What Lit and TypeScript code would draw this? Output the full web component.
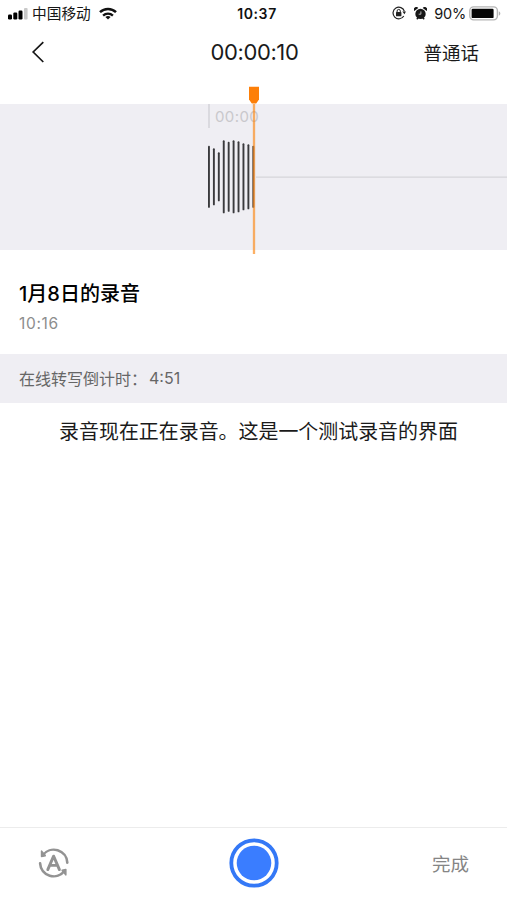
import { LitElement, html, svg, css } from "lit";
import { customElement, property } from "lit/decorators.js";

@customElement("status-bar")
class StatusBar extends LitElement {
  static styles = css`
    :host {
      display: grid;
      grid-template-columns: 1fr auto 1fr;
      align-items: center;
      height: 28px;
      padding: 0 6px 0 8px;
      box-sizing: border-box;
      font-size: 14px;
      color: #161616;
    }
    .side { display: flex; align-items: center; }
    .right { justify-content: flex-end; }
    .signal { margin-right: 4px; }
    .carrier { font-size: 14.7px; line-height: 20px; }
    .wifi { margin: 0 0 2px 8px; }
    .clock { font-weight: 600; font-size: 14px; letter-spacing: 0.6px; color: #111; padding: 0 0 2px 5px; }
    .lock { margin: 0 8px 2px 0; }
    .alarm { margin: 0 7px 2px 0; }
    .percent { margin-right: 3px; font-size: 14.5px; letter-spacing: -0.2px; padding-bottom: 1px; }
    .battery { margin-bottom: 2px; }
    svg { display: block; flex: none; }
  `;
  render() {
    return html`
      <div class="side">
        <svg class="signal" width="20" height="12" viewBox="0 0 20 12">
          <rect x="0" y="6.5" width="4" height="5" rx="1.2" />
          <rect x="5.3" y="4.6" width="4" height="6.9" rx="1.2" />
          <rect x="10.5" y="2.5" width="4" height="9" rx="1.2" />
          <rect x="16" y="0" width="3.6" height="11.5" rx="1" fill="#c9c9c9" />
        </svg>
        <span class="carrier">中国移动</span>
        <svg class="wifi" width="18" height="13" viewBox="0 0 18 13" fill="none" stroke="#111" stroke-width="2.5">
          <path d="M1 5.2a11.4 11.4 0 0 1 16 0" />
          <path d="M4.1 8.6a7 7 0 0 1 9.8 0" stroke-width="2.3" />
          <path d="M9 12.6 6.4 10.1a3.8 3.8 0 0 1 5.2 0z" fill="#111" stroke="none" />
        </svg>
      </div>
      <span class="clock">10:37</span>
      <div class="side right">
        <svg class="lock" width="14" height="14" viewBox="0 0 14 14" fill="none" stroke="#222">
          <path d="M11.8 10A5.8 5.8 0 1 1 12.4 5.3" stroke-width="1.2" />
          <path d="M10.4 5.4h3.6l-1.6 2.8z" fill="#222" stroke="none" />
          <rect x="4" y="6.1" width="5.4" height="4.2" rx=".6" fill="#222" stroke="none" />
          <path d="M5.1 6.4V5a1.6 1.6 0 0 1 3.2 0v1.4" stroke-width="1" />
        </svg>
        <svg class="alarm" width="13" height="13" viewBox="0 0 13 13">
          <circle cx="6.5" cy="6.9" r="5.2" fill="#161616" />
          <path d="M.3 4a2.5 2.5 0 0 1 4-3zM12.7 4a2.5 2.5 0 0 0-4-3z" fill="#161616" />
          <path d="M2.8 12.2l1.4-1.6M10.2 12.2 8.8 10.6" stroke="#161616" stroke-width="1.4" />
          <path d="M6.9 4.4v2.8H4.7" fill="none" stroke="#ddd" stroke-width=".8" />
        </svg>
        <span class="percent">90%</span>
        <svg class="battery" width="32" height="15" viewBox="0 0 32 15">
          <rect x=".8" y=".9" width="27.6" height="13" rx="3.8" fill="#fff" stroke="#b5b5b5" stroke-width="1.4" />
          <rect x="2.6" y="2.8" width="22" height="9.3" rx="1.2" fill="#050505" />
          <path d="M29.8 5.2c2 .8 2 3.7 0 4.5z" fill="#b0b0b0" />
        </svg>
      </div>
    `;
  }
}

@customElement("wave-form")
class WaveForm extends LitElement {
  static styles = css`
    :host { display: block; height: 146px; background: #efeef3; }
    svg { display: block; overflow: visible; }
    .stamp { font-size: 15px; letter-spacing: 0.4px; fill: #c9c8cc; }
  `;
  private levels = [62, 57, 49, 73, 70, 73, 71, 67, 65, 62];
  render() {
    return html`
      <svg width="507" height="146" viewBox="0 0 507 146">
        <path d="M209 0v24" stroke="#d2d1d6" stroke-width="1.4" />
        <text class="stamp" x="215" y="17.5">00:00</text>
        <path d="M256 73.2H507" stroke="#d6d5da" stroke-width="1.3" />
        ${this.levels.map((h, i) => svg`<rect x=${208 + i * 4.93} y=${72.8 - h / 2} width="1.9" height=${h} rx=".9" fill="#3a3a3d" />`)}
        <path d="M254 0V150" stroke="#fb8a1c" stroke-opacity=".68" stroke-width="2.3" />
        <path d="M249 -17.2h10v12.7L256.2-.6h-4.4L249-4.5z" fill="#fd7f08" />
      </svg>
    `;
  }
}

@customElement("app-root")
class AppRoot extends LitElement {
  @property() elapsed = "00:00:10";
  static styles = css`
    :host {
      display: flex;
      flex-direction: column;
      width: 507px;
      height: 900px;
      background: #fff;
      overflow: hidden;
      font-family: Inter, "Noto Sans CJK SC", sans-serif;
      color: #1a1a1a;
      white-space: nowrap;
    }
    .nav {
      display: grid;
      grid-template-columns: 1fr auto 1fr;
      align-items: center;
      height: 48px;
      margin-bottom: 28px;
      padding: 0 28px 0 31px;
    }
    .back { display: block; }
    .elapsed { font-size: 22px; letter-spacing: -0.4px; padding-right: 1px; }
    .language { justify-self: end; font-size: 18.5px; }
    .info { padding: 30px 19px 0; height: 104px; box-sizing: border-box; }
    .title { font-size: 20px; line-height: 28px; font-weight: 500; color: #000; }
    .time { margin-top: 5px; font-size: 15.5px; letter-spacing: 0.65px; line-height: 22px; color: #8d8d8d; }
    .countdown {
      display: flex;
      align-items: center;
      height: 49px;
      padding: 0 19px 2px;
      box-sizing: border-box;
      background: #efeef3;
      font-size: 16px;
      color: #666;
    }
    .remaining { margin-left: 2px; }
    .transcript { flex: 1; padding: 14px 0 0 10px; text-align: center; font-size: 19.95px; line-height: 30px; }
    .toolbar {
      display: grid;
      grid-template-columns: 1fr auto 1fr;
      align-items: center;
      height: 73px;
      box-sizing: border-box;
      border-top: 1px solid #ececec;
      padding: 0 38px 2px 38px;
    }
    .record { margin-left: 1px; }
    .done { justify-self: end; font-size: 18.5px; color: #858585; }
  `;
  render() {
    return html`
      <status-bar></status-bar>
      <div class="nav">
        <svg class="back" width="14" height="22" viewBox="0 0 14 22" fill="none" stroke="#161616" stroke-width="1.7">
          <path d="M12.3 1.2 2.2 11l10.1 10" />
        </svg>
        <span class="elapsed">${this.elapsed}</span>
        <span class="language">普通话</span>
      </div>
      <wave-form></wave-form>
      <div class="info">
        <div class="title">1月8日的录音</div>
        <div class="time">10:16</div>
      </div>
      <div class="countdown">在线转写倒计时：<span class="remaining">4:51</span></div>
      <div class="transcript">录音现在正在录音。这是一个测试录音的界面</div>
      <div class="toolbar">
        <svg width="32" height="32" viewBox="0 0 32 32" fill="none" stroke="#939393" stroke-width="2.6" stroke-linecap="round" stroke-linejoin="round">
          <path d="M4.8 8.2A13.6 13.6 0 0 1 29.3 15.6" />
          <path d="M26.6 23.8A13.6 13.6 0 0 1 2.1 16.4" />
          <path d="M3.6 4.2v5.2l3.6-.8zM27.8 27.8v-5.2l-3.6.8z" fill="#939393" stroke-width="1.6" />
          <path d="M9.8 22.6 15.6 9.2l5.8 13.4M12 18.4h7.2" stroke-width="2.9" />
        </svg>
        <svg class="record" width="50" height="50" viewBox="0 0 50 50">
          <circle cx="25" cy="25" r="22.7" fill="#fff" stroke="#3478f6" stroke-width="3.8" />
          <circle cx="25" cy="25" r="17.3" fill="#3a7dff" />
        </svg>
        <span class="done">完成</span>
      </div>
    `;
  }
}
